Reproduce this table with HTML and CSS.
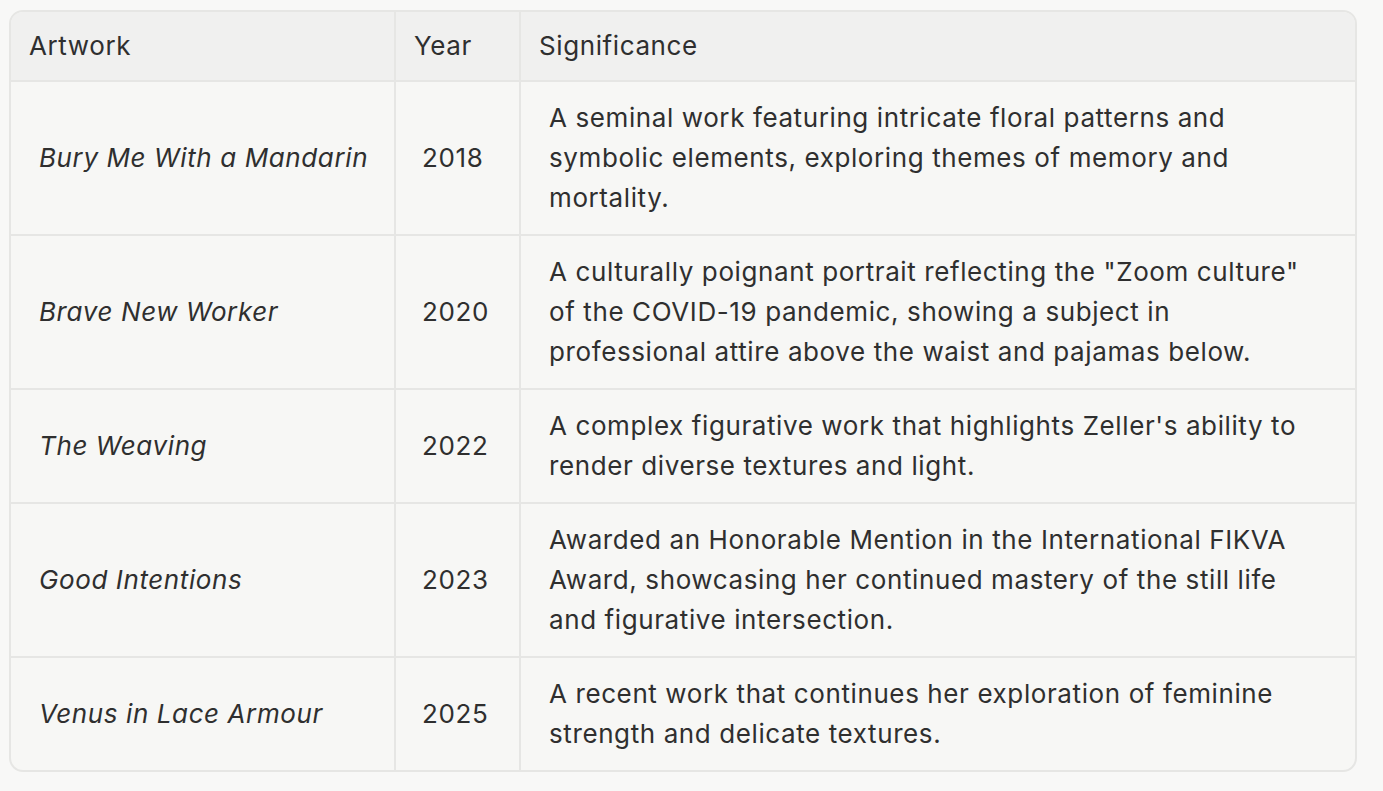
FILE: index.html
```html
<!DOCTYPE html>
<html lang="en">
<head>
<meta charset="utf-8">
<title>Artworks</title>
<link rel="stylesheet" href="styles.css">
</head>
<body>
<div class="table-wrap">
  <table class="art-table">
    <colgroup>
      <col class="c-art">
      <col class="c-year">
      <col class="c-sig">
    </colgroup>
    <thead>
      <tr>
        <th>Artwork</th>
        <th>Year</th>
        <th>Significance</th>
      </tr>
    </thead>
    <tbody>
      <tr>
        <td class="art">Bury Me With a Mandarin</td>
        <td class="year">2018</td>
        <td class="sig">A seminal work featuring intricate floral patterns and symbolic elements, exploring themes of memory and mortality.</td>
      </tr>
      <tr>
        <td class="art">Brave New Worker</td>
        <td class="year">2020</td>
        <td class="sig">A culturally poignant portrait reflecting the "Zoom culture" of the COVID-19 pandemic, showing a subject in professional attire above the waist and pajamas below.</td>
      </tr>
      <tr>
        <td class="art">The Weaving</td>
        <td class="year">2022</td>
        <td class="sig">A complex figurative work that highlights Zeller's ability to render diverse textures and light.</td>
      </tr>
      <tr>
        <td class="art">Good Intentions</td>
        <td class="year">2023</td>
        <td class="sig">Awarded an Honorable Mention in the International FIKVA Award, showcasing her continued mastery of the still life and figurative intersection.</td>
      </tr>
      <tr>
        <td class="art">Venus in Lace Armour</td>
        <td class="year">2025</td>
        <td class="sig">A recent work that continues her exploration of feminine strength and delicate textures.</td>
      </tr>
    </tbody>
  </table>
</div>
</body>
</html>
```
FILE: styles.css
```css
html, body {
  margin: 0;
  padding: 0;
  background: #f8f8f7;
}
body {
  padding: 10px 26px 0 9px;
  font-family: Inter, "Noto Sans", sans-serif;
  color: #2f2f2f;
}
.table-wrap {
  width: 1348px;
  border: 2px solid #e6e6e4;
  border-radius: 14px;
  overflow: hidden;
  box-sizing: border-box;
  background: #f7f7f5;
}
.art-table {
  width: 100%;
  border-collapse: collapse;
  table-layout: fixed;
  font-size: 26px;
  letter-spacing: 0.6px;
  line-height: 40px;
}
.c-art { width: 384px; }
.c-year { width: 125px; }
.art-table th {
  background: #f0f0ef;
  font-weight: 400;
  text-align: left;
  padding: 14px 19px 14px 18px;
  border-bottom: 2px solid #e6e6e4;
  border-right: 2px solid #e6e6e4;
}
.art-table td {
  padding: 16px 30px 16px 28px;
  border-bottom: 2px solid #e6e6e4;
  border-right: 2px solid #e6e6e4;
  vertical-align: middle;
}
.art-table td.art {
  font-style: italic;
  padding-right: 4px;
  white-space: nowrap;
}
.art-table td.year {
  padding-left: 26px;
  padding-right: 10px;
}
.art-table td.sig {
  padding-right: 40px;
}
.art-table th:last-child,
.art-table td:last-child {
  border-right: none;
}
.art-table tbody tr:last-child td {
  border-bottom: none;
}
```
